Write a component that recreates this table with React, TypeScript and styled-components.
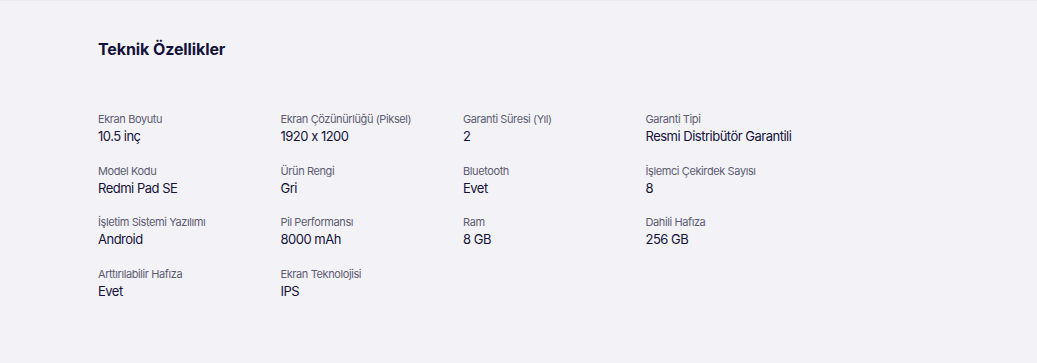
import React from 'react';
import styled, { createGlobalStyle } from 'styled-components';

const GlobalStyle = createGlobalStyle`
  html, body {
    margin: 0;
    padding: 0;
    background: #f3f2f7;
  }
  body {
    font-family: Inter, "Noto Sans", sans-serif;
    font-feature-settings: "calt" 0;
  }
`;

const Wrapper = styled.section`
  min-height: 363px;
  box-sizing: border-box;
  padding: 38px 0 0 98px;
  background: #f3f2f7;
  border-top: 1px solid #ececef;
`;

const Title = styled.h2`
  margin: 0;
  font-size: 16px;
  line-height: 20px;
  font-weight: 700;
  color: #14123a;
  letter-spacing: -0.1px;
`;

const Grid = styled.dl`
  margin: 53px 0 0;
  display: grid;
  grid-template-columns: repeat(4, 182.5px);
  row-gap: 19.5px;
`;

const Cell = styled.div`
  display: flex;
  flex-direction: column;
  gap: 2px;
`;

const Label = styled.dt`
  font-size: 11px;
  line-height: 14px;
  color: #5d5c72;
  letter-spacing: -0.4px;
`;

const Value = styled.dd`
  margin: 0;
  font-size: 13px;
  line-height: 16px;
  color: #14123a;
  letter-spacing: -0.5px;
`;

const specs: [string, string][] = [
  ['Ekran Boyutu', '10.5 inç'],
  ['Ekran Çözünürlüğü (Piksel)', '1920 x 1200'],
  ['Garanti Süresi (Yıl)', '2'],
  ['Garanti Tipi', 'Resmi Distribütör Garantili'],
  ['Model Kodu', 'Redmi Pad SE'],
  ['Ürün Rengi', 'Gri'],
  ['Bluetooth', 'Evet'],
  ['İşlemci Çekirdek Sayısı', '8'],
  ['İşletim Sistemi Yazılımı', 'Android'],
  ['Pil Performansı', '8000 mAh'],
  ['Ram', '8 GB'],
  ['Dahili Hafıza', '256 GB'],
  ['Arttırılabilir Hafıza', 'Evet'],
  ['Ekran Teknolojisi', 'IPS'],
];

export default function App() {
  return (
    <>
      <GlobalStyle />
      <Wrapper>
        <Title>Teknik Özellikler</Title>
        <Grid>
          {specs.map(([label, value]) => (
            <Cell key={label}>
              <Label>{label}</Label>
              <Value>{value}</Value>
            </Cell>
          ))}
        </Grid>
      </Wrapper>
    </>
  );
}
